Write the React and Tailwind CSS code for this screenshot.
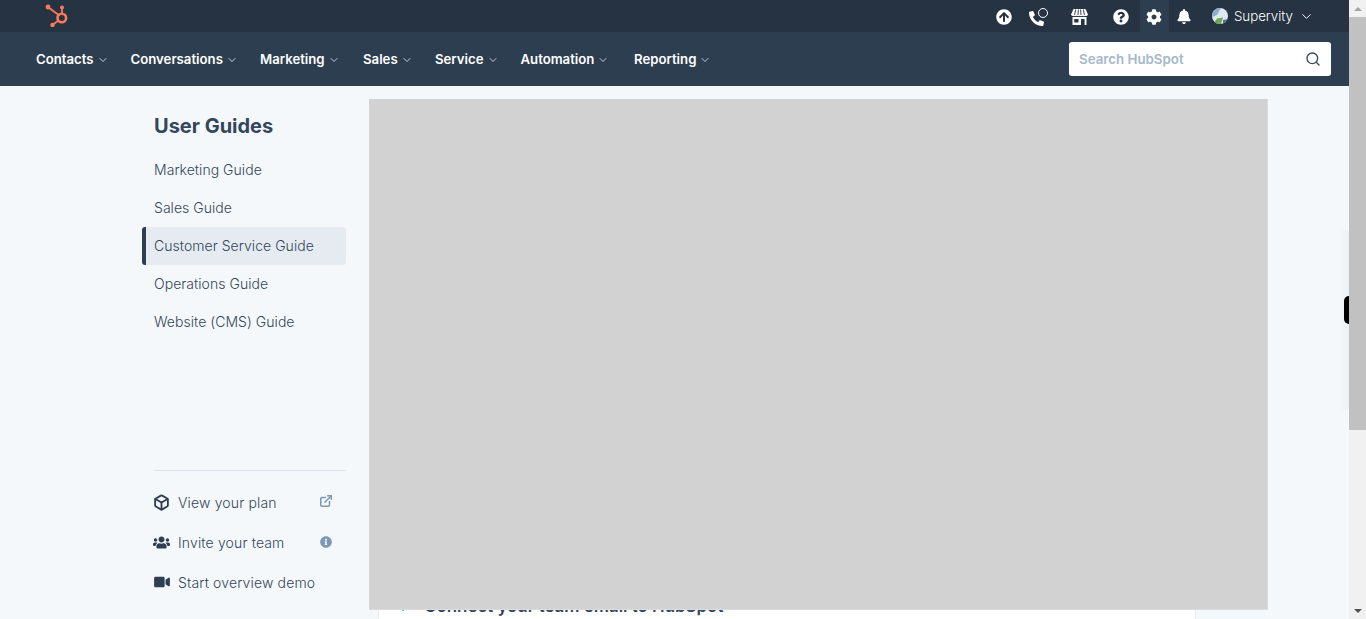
import React from 'react';
import { ChevronDown, Search, ExternalLink, Box } from 'lucide-react';
import { FaArrowCircleUp, FaPhoneAlt, FaQuestionCircle, FaCog, FaBell, FaUsers, FaVideo, FaInfoCircle } from 'react-icons/fa';

const navItems = [
  { label: 'Contacts', w: 'w-[94.5px]' },
  { label: 'Conversations', w: 'w-[129.5px]' },
  { label: 'Marketing', w: 'w-[103px]' },
  { label: 'Sales', w: 'w-[72px]' },
  { label: 'Service', w: 'w-[85.5px]' },
  { label: 'Automation', w: 'w-[113.5px]' },
  { label: 'Reporting', w: 'w-[90px]' },
];

const guides = ['Marketing Guide', 'Sales Guide', 'Customer Service Guide', 'Operations Guide', 'Website (CMS) Guide'];

const HubLogo = () => (
  <svg width="24" height="26" viewBox="0 0 24 26" fill="none">
    <circle cx="4" cy="6" r="2.4" fill="#ff7a59" />
    <circle cx="18" cy="6.6" r="2" fill="#ff7a59" />
    <circle cx="8.5" cy="24" r="2.2" fill="#ff7a59" />
    <path d="M4.5 6.5L14 13.5M18 7v5M9 23.5L14.5 19.5" stroke="#ff7a59" strokeWidth="1.7" />
    <circle cx="17.8" cy="17" r="4.3" stroke="#ff7a59" strokeWidth="2.6" />
  </svg>
);

const StoreIcon = () => (
  <svg width="17" height="16" viewBox="0 0 17 16">
    <path d="M2.5 0h12L17 5.4a1.9 1.9 0 0 1-2.8 1.3 2.6 2.6 0 0 1-2.9 0 2.6 2.6 0 0 1-2.8 0 2.6 2.6 0 0 1-2.9 0 2.6 2.6 0 0 1-2.8 0A1.9 1.9 0 0 1 0 5.4z" fill="white" />
    <path d="M4.6 0.5L3.6 6M7.4 0.5L7 6M9.6 0.5L10 6M12.4 0.5L13.4 6" stroke="#253342" strokeWidth="0.9" />
    <path fillRule="evenodd" d="M1.5 8h14v8h-14zM3.2 10v3.6h4.3V10zM10 10v6h3.6v-6z" fill="white" />
  </svg>
);

const PhoneStatus = () => (
  <div className="relative w-[20px] h-[18px] mt-[2px]">
    <FaPhoneAlt className="absolute left-0 bottom-0 w-[15px] h-[15px] text-white" />
    <span className="absolute right-[1px] top-0 w-[10px] h-[10px] rounded-full border border-white" />
  </div>
);

const Avatar = () => (
  <svg width="16" height="16" viewBox="0 0 16 16" className="rounded-full">
    <rect width="16" height="16" fill="#dfe9f2" />
    <path d="M0 0h9L5 7 0 9z" fill="#8fb0cc" />
    <path d="M1 16L5 10.5 11 9.5 9 16z" fill="#6aa84f" />
    <path d="M11 12l5-1v5h-5z" fill="#516f90" />
  </svg>
);

const FooterLink = ({ icon, label, right }) => (
  <div className="flex items-center h-[40px] text-[14px] font-light tracking-[0.15px] text-[#33475b] pb-[2px]">
    <span className="w-[24px] flex items-center text-[#2d3e50]">{icon}</span>
    <span className="flex-1">{label}</span>
    <span className="w-[27px] text-[#7c98b6]">{right}</span>
  </div>
);

export default function App() {
  return (
    <div className="relative flex h-[619px] overflow-hidden bg-[#f5f8fa] font-['Inter','Liberation_Sans',sans-serif]">
      <div className="relative flex-1 min-w-0 flex flex-col">
        {/* top utility bar */}
        <header className="h-[32px] bg-[#253342] flex items-center">
          <div className="ml-[44px] mt-[-4px]"><HubLogo /></div>
          <div className="ml-auto flex items-center h-full text-white">
            <FaArrowCircleUp className="w-[16px] h-[16px] mt-[2px]" />
            <div className="ml-[17px]"><PhoneStatus /></div>
            <div className="ml-[22px] mt-[2px]"><StoreIcon /></div>
            <FaQuestionCircle className="ml-[25px] w-[16px] h-[16px] mt-[2px]" />
            <div className="ml-[11px] w-[29px] h-full bg-[#2d3e50] flex items-center justify-center">
              <FaCog className="w-[16px] h-[16px] mt-[2px]" />
            </div>
            <FaBell className="ml-[8px] w-[14px] h-[15px]" />
            <div className="ml-[21px]"><Avatar /></div>
            <span className="ml-[6px] mt-[1px] text-[13.3px] font-light">Supervity</span>
            <ChevronDown className="ml-[6px] w-[15px] h-[15px]" strokeWidth={1.5} />
            <div className="w-[35px]" />
          </div>
        </header>

        {/* main nav */}
        <nav className="h-[54px] bg-[#2d3e50] flex items-center pl-[36px] pr-[18px]">
          {navItems.map((item) => (
            <div key={item.label} className={`flex items-center ${item.w} mt-[2px] text-white text-[13.2px] font-semibold`}>
              {item.label}
              <ChevronDown className="ml-[3px] w-[12px] h-[12px] mt-[1px] text-[#eaf0f6]" strokeWidth={1.6} />
            </div>
          ))}
          <div className="ml-auto w-[262px] h-[34px] bg-white rounded-[3px] flex items-center justify-between px-[10px] mt-[-1px]">
            <span className="text-[13.3px] font-semibold text-[#a5b8cc] mt-[2px]">Search HubSpot</span>
            <Search className="w-[16px] h-[16px] text-[#33475b]" strokeWidth={2} />
          </div>
        </nav>

        <div className="flex-1 flex min-h-0 pl-[142px]">
          {/* left sidebar */}
          <aside className="w-[204px] flex flex-col pt-[27px] pb-[16px]">
            <h1 className="pl-[12px] text-[20px] leading-[26px] font-bold text-[#33475b]">User Guides</h1>
            <div className="mt-[12px]">
              {guides.map((g) => {
                const active = g === 'Customer Service Guide';
                return (
                  <div
                    key={g}
                    className={`h-[38px] flex items-center pl-[8px] pb-[2px] border-l-4 text-[14px] font-light tracking-[0.04px] text-[#33475b] rounded-[3px] ${active ? 'border-[#2d3e50] bg-[#e5ebf1]' : 'border-transparent'}`}
                  >
                    {g}
                  </div>
                );
              })}
            </div>
            <div className="mt-auto ml-[12px]">
              <div className="border-t border-[#dfe3eb] pt-[12px]">
                <FooterLink
                  icon={<Box className="w-[17px] h-[17px] ml-[-1px]" strokeWidth={2.6} />}
                  label="View your plan"
                  right={<ExternalLink className="w-[14px] h-[14px] mb-[3px]" strokeWidth={2.6} />}
                />
                <FooterLink
                  icon={<FaUsers className="w-[17px] h-[17px] ml-[-1px]" />}
                  label="Invite your team"
                  right={<FaInfoCircle className="w-[12px] h-[12px] ml-[1px]" />}
                />
                <FooterLink icon={<FaVideo className="w-[16px] h-[14px]" />} label="Start overview demo" />
              </div>
            </div>
          </aside>

          {/* content sitting behind the grey block */}
          <main className="flex-1 min-w-0 pl-[32px] flex flex-col justify-end">
            <div className="w-[818px] h-[100px] bg-white border-x border-[#e9edf2] flex items-end pl-[21px]">
              <div className="flex items-center mb-0 text-[#33475b]">
                <svg width="8" height="8" viewBox="0 0 8 8" fill="none" className="mt-[2px]">
                  <path d="M1 5l2 2 4-6" stroke="#00a4bd" strokeWidth="1.6" />
                </svg>
                <span className="ml-[16px] text-[16.9px] font-semibold">Connect your team email to HubSpot</span>
              </div>
            </div>
          </main>
        </div>

        {/* grey placeholder lying over the page */}
        <div className="absolute left-[369px] top-[99px] w-[899px] h-[511px] bg-[#d2d2d2] border-r border-b border-[#dcdcdc]" />
        {/* chat tab peeking in at the edge, with its faint shadow */}
        <div className="absolute right-0 top-[230px] w-[10px] h-[180px] bg-linear-to-r from-transparent to-[#eef1f4]" />
        <div className="absolute right-0 top-[296px] w-[5px] h-[28px] bg-black rounded-l-[6px]" />
      </div>

      {/* browser scrollbar */}
      <div className="w-[17px] bg-[#f1f1f1] flex flex-col items-center">
        <div className="h-[17px] flex items-center justify-center">
          <span className="w-0 h-0 border-x-[4px] border-x-transparent border-b-[4px] border-b-[#a3a3a3]" />
        </div>
        <div className="w-full h-[413px] bg-[#c1c1c1]" />
        <div className="mt-auto h-[17px] flex items-center justify-center">
          <span className="w-0 h-0 border-x-[4px] border-x-transparent border-t-[4px] border-t-[#505050]" />
        </div>
      </div>
    </div>
  );
}
